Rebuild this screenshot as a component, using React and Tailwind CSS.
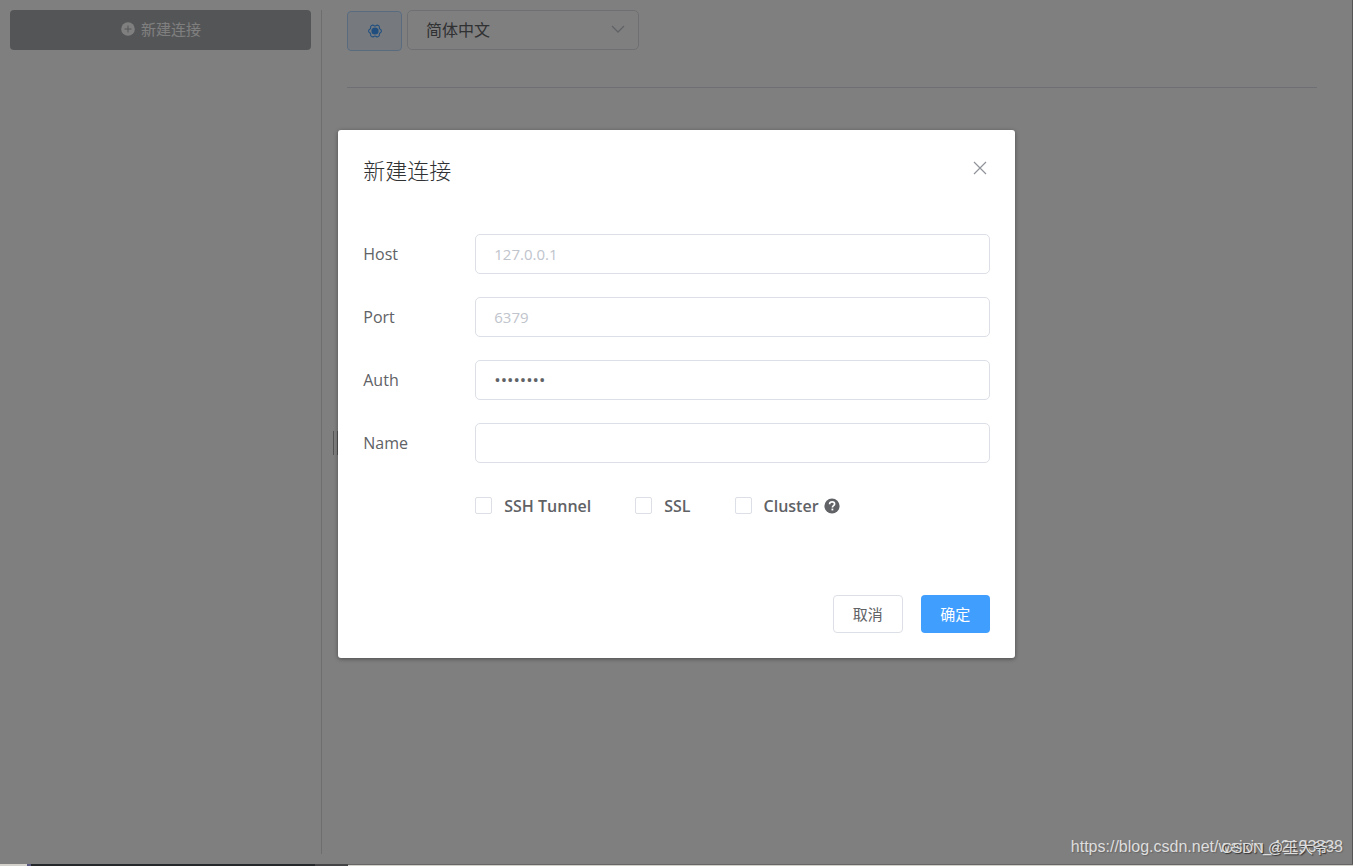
import React, { useState } from "react";

const FIELDS = [
    { id: "host", label: "Host", type: "text", placeholder: "127.0.0.1", value: "" },
    { id: "port", label: "Port", type: "text", placeholder: "6379", value: "" },
    { id: "auth", label: "Auth", type: "password", placeholder: "", value: "12345678" },
    { id: "name", label: "Name", type: "text", placeholder: "", value: "" },
];

const PlusIcon = () => (
    <svg viewBox="0 0 14 14" className="w-[14px] h-[14px]" aria-hidden="true">
        <circle cx="7" cy="7" r="6.8" fill="#fff" />
        <path d="M7 3.5v7M3.5 7h7" stroke="#a8abae" strokeWidth="1" />
    </svg>
);

const SettingsIcon = () => (
    <svg viewBox="0 0 14 14" className="w-[14px] h-[14px]" aria-hidden="true">
        <path
            d="M3.4 1.6Q4.8 .6 5.8 1.5Q7 2.4 8.2 1.5Q9.2 .6 10.6 1.6Q11.6 2.4 11.3 3.6Q11.2 4.8 12.3 5.3Q13.4 5.8 13.4 7T12.3 8.7Q11.2 9.2 11.3 10.4Q11.6 11.6 10.6 12.4Q9.2 13.4 8.2 12.5Q7 11.6 5.8 12.5Q4.8 13.4 3.4 12.4Q2.4 11.6 2.7 10.4Q2.8 9.2 1.7 8.7Q.6 8.2 .6 7T1.7 5.3Q2.8 4.8 2.7 3.6Q2.4 2.4 3.4 1.6Z"
            fill="none"
            stroke="#409eff"
            strokeWidth="1.1"
        />
        <circle cx="7" cy="7" r="3.6" fill="#409eff" />
    </svg>
);

const ChevronIcon = () => (
    <svg
        viewBox="0 0 14 8"
        className="pointer-events-none absolute right-[14px] top-[15px] w-[14px] h-[8px]"
        aria-hidden="true"
    >
        <path d="M1 1l6 6 6-6" fill="none" stroke="#c0c4cc" strokeWidth="1.3" />
    </svg>
);

const CloseIcon = () => (
    <svg viewBox="0 0 14 14" className="w-[14px] h-[14px]" aria-hidden="true">
        <path d="M1 1l12 12M13 1L1 13" stroke="#909399" strokeWidth="1.2" />
    </svg>
);

const HelpIcon = () => (
    <svg viewBox="0 0 16 16" className="w-4 h-4" aria-hidden="true">
        <circle cx="8" cy="8" r="7.6" fill="#606266" />
        <path
            d="M5.6 6.3C5.6 4.7 6.6 3.8 8.1 3.8s2.5.9 2.5 2.2c0 1.7-2.2 1.7-2.2 3.4"
            fill="none"
            stroke="#fff"
            strokeWidth="1.7"
        />
        <rect x="7.5" y="10.6" width="1.8" height="1.8" fill="#fff" />
    </svg>
);

const Sidebar = () => (
    <aside className="w-[322px] shrink-0 px-[10px] border-r border-[#dcdcdc]">
        <button
            type="button"
            className="w-full h-[40px] pb-[2px] pl-px rounded-[4px] bg-[#a8abae] text-white text-[15px] flex items-center justify-center gap-[6px]"
        >
            <PlusIcon />
            新建连接
        </button>
    </aside>
);

const DragHandle = () => (
    <div className="w-[25px] shrink-0 flex items-center pl-[11px]">
        <div className="w-[5px] h-[24px] mt-[22px] border-x border-[#a8a8a8]" />
    </div>
);

const Toolbar = () => (
    <header className="flex items-start gap-[5px] pb-[36px] border-b border-[#dcdfe6]">
        <button
            type="button"
            aria-label="设置"
            className="w-[55px] h-[40px] mt-px pb-px rounded-[4px] border border-[#b3d8ff] bg-[#ecf5ff] flex items-center justify-center"
        >
            <SettingsIcon />
        </button>
        <div className="relative w-[232px]">
            <select
                aria-label="语言"
                className="w-full h-[40px] pl-[18px] rounded-[5px] border border-[#dcdfe6] bg-white text-base text-[#606266] appearance-none"
            >
                <option>简体中文</option>
            </select>
            <ChevronIcon />
        </div>
    </header>
);

const Field = ({ id, label, type, placeholder, value }) => {
    const [text, setText] = useState(value);

    return (
        <div className="flex items-center">
            <label htmlFor={id} className="w-[112px] shrink-0 text-base">
                {label}
            </label>
            <input
                id={id}
                type={type}
                value={text}
                placeholder={placeholder}
                onChange={(e) => setText(e.target.value)}
                className={`flex-1 min-w-0 h-[40px] px-[18px] rounded-[5px] border border-[#dcdfe6] bg-white placeholder:text-[#c0c4cc] outline-none ${
                    type === "password" ? "text-[17px]" : "text-[15px]"
                }`}
            />
        </div>
    );
};

const Option = ({ label, children }) => (
    <label className="flex items-center text-base font-semibold">
        <input
            type="checkbox"
            className="appearance-none w-[17px] h-[17px] mr-3 rounded-[2px] border border-[#dcdfe6] bg-white checked:bg-[#409eff]"
        />
        {label}
        {children}
    </label>
);

const ConnectionDialog = () => (
    <div className="absolute inset-0 bg-black/50 flex justify-center items-start pt-[15vh] shadow-[inset_-1px_0_#555]">
        <form
            role="dialog"
            aria-labelledby="dialog-title"
            onSubmit={(e) => e.preventDefault()}
            className="w-1/2 p-[25px] rounded-[3px] bg-white text-[#606266] shadow-[0_1px_4px_rgba(0,0,0,0.4)]"
        >
            <div className="flex items-start justify-between">
                <h2 id="dialog-title" className="text-[22px] leading-[30px] font-light text-[#303133]">
                    新建连接
                </h2>
                <button type="button" aria-label="关闭" className="p-[3px] mt-[3px]">
                    <CloseIcon />
                </button>
            </div>
            <div className="flex flex-col gap-[23px] mt-[49px]">
                {FIELDS.map((field) => (
                    <Field key={field.id} {...field} />
                ))}
                <div className="flex items-center gap-[44px] h-[40px] pl-[112px]">
                    <Option label="SSH Tunnel" />
                    <Option label="SSL" />
                    <Option label="Cluster">
                        <span className="ml-[5px]">
                            <HelpIcon />
                        </span>
                    </Option>
                </div>
            </div>
            <div className="flex justify-end gap-[18px] mt-[69px]">
                <button
                    type="button"
                    className="w-[70px] h-[38px] rounded-[4px] border border-[#dcdfe6] bg-white text-[15px]"
                >
                    取消
                </button>
                <button
                    type="submit"
                    className="w-[69px] h-[38px] rounded-[4px] bg-[#409eff] text-white text-[15px]"
                >
                    确定
                </button>
            </div>
        </form>
    </div>
);

const Watermark = () => (
    <div className="pointer-events-none absolute right-[10px] bottom-[5px] text-[#dedede]">
        <p className="font-['Liberation_Sans',Arial,sans-serif] text-base leading-[24px] [text-shadow:1px_1px_1px_#666]">
            https://blog.csdn.net/weixin_42193838
        </p>
        <p className="absolute right-[6px] top-0 whitespace-nowrap font-['Liberation_Sans','Noto_Sans_CJK_SC',sans-serif] text-[15px] leading-[26px] [text-shadow:1px_1px_1px_#333]">
            CSDN @王大爷~
        </p>
    </div>
);

const App = () => (
    <div className="h-screen flex flex-col overflow-hidden font-['Open_Sans','Noto_Sans_CJK_SC',sans-serif]">
        <div className="relative flex-1 flex py-[10px] bg-white">
            <Sidebar />
            <DragHandle />
            <main className="flex-1 pr-[36px]">
                <Toolbar />
            </main>
            <ConnectionDialog />
            <Watermark />
        </div>
        <div className="flex h-[2px] bg-[#d4d0cc]">
            <div className="w-[4px] ml-[27px] bg-[#5a5a80]" />
            <div className="w-[284px] bg-[#25282a]" />
            <div className="w-[33px] bg-[#444446]" />
            <div className="flex-1 border-t border-[#666]" />
        </div>
    </div>
);

export default App;
